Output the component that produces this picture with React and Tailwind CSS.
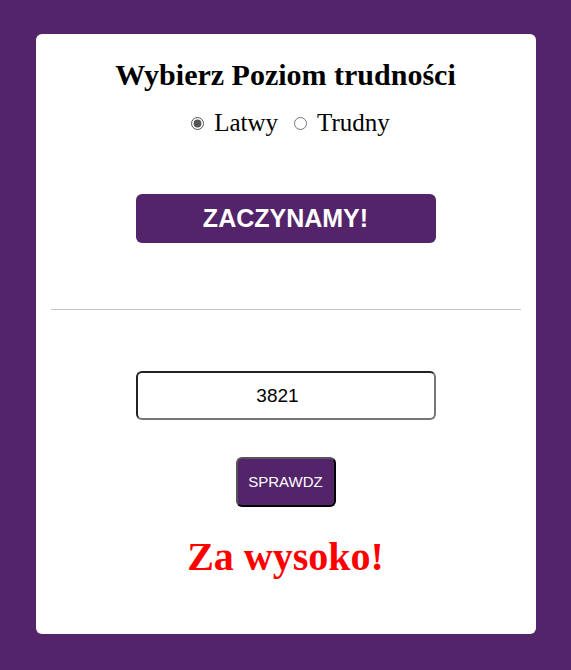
import React, { useState } from "react";

export default function App() {
  const [level, setLevel] = useState("easy");
  const [guess, setGuess] = useState("3821");

  return (
    <div className="min-h-[670px] w-full bg-[#54246b] pt-[34px] pb-[36px]">
      <div className="mx-auto flex w-[500px] h-[600px] flex-col items-center rounded-md bg-white px-[15px]">
        {/* Difficulty */}
        <h2 className="mt-[25px] h-[32px] font-['Liberation_Serif',serif] text-[30px] font-bold leading-[32px] text-black">
          Wybierz Poziom trudności
        </h2>
        <div className="mt-[18px] flex h-[28px] items-center pl-[8px] font-['Liberation_Serif',serif] text-[25px] leading-[28px] text-black">
          <label className="flex items-center">
            <input
              type="radio"
              name="level"
              checked={level === "easy"}
              onChange={() => setLevel("easy")}
              className="mr-[10px] ml-[2px] h-[13px] w-[13px] accent-[#555]"
            />
            Latwy
          </label>
          <label className="ml-[16px] flex items-center">
            <input
              type="radio"
              name="level"
              checked={level === "hard"}
              onChange={() => setLevel("hard")}
              className="mr-[10px] h-[13px] w-[13px] accent-[#555]"
            />
            Trudny
          </label>
        </div>

        <button className="mt-[57px] h-[49px] w-[300px] rounded-md bg-[#54246b] font-['Liberation_Sans',sans-serif] text-[25px] font-bold text-white">
          ZACZYNAMY!
        </button>

        <hr className="mt-[66px] w-full border-t border-[#c8c8c8]" />

        {/* Guess */}
        <input
          type="text"
          value={guess}
          onChange={(e) => setGuess(e.target.value)}
          className="mt-[61px] h-[49px] w-[300px] rounded-md border-2 border-t-[#222] border-l-[#222] border-r-[#767676] border-b-[#767676] pr-[16px] text-center font-['Liberation_Sans',sans-serif] text-[19px] text-black outline-none"
        />
        <button className="mt-[37px] h-[50px] w-[100px] rounded-md border-2 border-t-[#555] border-l-[#555] border-r-black border-b-black bg-[#54246b] font-['Liberation_Sans',sans-serif] text-[15px] text-white">
          SPRAWDZ
        </button>

        <p className="mt-[27px] font-['Liberation_Serif',serif] text-[40px] font-bold leading-[46px] text-[#ff0000]">
          Za wysoko!
        </p>
      </div>
    </div>
  );
}
